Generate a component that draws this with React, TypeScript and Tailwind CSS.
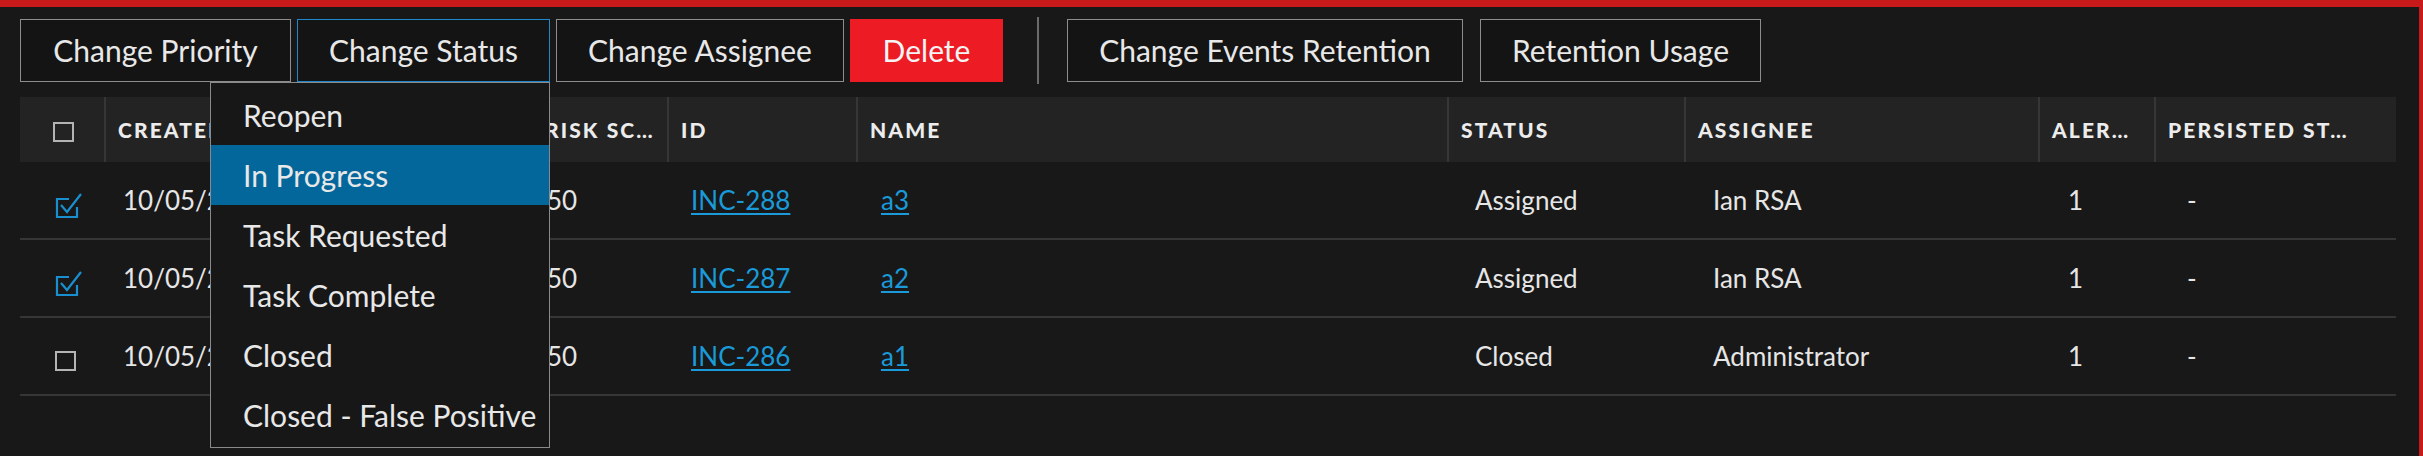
import React from 'react'

const cols = 'grid grid-cols-[84px_427px_136px_189px_591px_237px_354px_116px_242px]'

const statuses = ['Reopen', 'In Progress', 'Task Requested', 'Task Complete', 'Closed', 'Closed - False Positive']

const rows = [
  { checked: true, created: '10/05/2023 11:42:18 AM', risk: '50', id: 'INC-288', name: 'a3', status: 'Assigned', assignee: 'Ian RSA', alerts: '1', persisted: '-' },
  { checked: true, created: '10/05/2023 11:40:02 AM', risk: '50', id: 'INC-287', name: 'a2', status: 'Assigned', assignee: 'Ian RSA', alerts: '1', persisted: '-' },
  { checked: false, created: '10/05/2023 11:37:51 AM', risk: '50', id: 'INC-286', name: 'a1', status: 'Closed', assignee: 'Administrator', alerts: '1', persisted: '-' },
]

const Box = ({ className = '' }: { className?: string }) => (
  <div className={`w-[21px] h-[20px] border-2 border-[#b4b4b4] ${className}`} />
)

const CheckedBox = () => (
  <svg width="27" height="27" viewBox="0 0 27 27" fill="none" stroke="#1a8fd0" strokeWidth="2.2" className="mt-[12px]">
    <path d="M14 6H2v18h20V14" />
    <path d="M6 12l6 7L26 1" />
  </svg>
)

const ToolButton = ({ label, width, active }: { label: string; width: string; active?: boolean }) => (
  <div className={`${width} h-[63px] flex items-center justify-center border bg-[#141414] text-[30px] text-[#e8e8e8] ${active ? 'border-[#1d87c9]' : 'border-[#8d8d8d]'}`}>
    {label}
  </div>
)

export default function App() {
  return (
    <div className="w-[2423px] h-[456px] overflow-hidden bg-[#181818] border-t-[7px] border-t-[#c8191b] border-r-[4px] border-r-[#c8191b] font-['Lato',sans-serif]">
      {/* toolbar */}
      <div className="flex items-center pl-[20px] pt-[10px]">
        <ToolButton label="Change Priority" width="w-[271px]" />
        <div className="relative ml-[6px]">
          <ToolButton label="Change Status" width="w-[253px]" active />
          <div className="absolute top-full right-0 z-10 w-[340px] border border-[#8a8a8a] bg-[#171717] py-[2px]">
            {statuses.map((s) => (
              <div
                key={s}
                className={`h-[60px] flex items-center pl-[32px] text-[30px] text-[#e8e8e8] ${s === 'In Progress' ? 'bg-[#04679b]' : ''}`}
              >
                {s}
              </div>
            ))}
          </div>
        </div>
        <div className="ml-[6px]">
          <ToolButton label="Change Assignee" width="w-[288px]" />
        </div>
        <div className="ml-[6px] w-[153px] h-[63px] flex items-center justify-center bg-[#ed1c24] text-[30px] text-[#f4f4f4]">
          Delete
        </div>
        <div className="ml-[34px] w-[2px] h-[67px] bg-[#6a6a6a]" />
        <div className="ml-[28px]">
          <ToolButton label="Change Events Retention" width="w-[396px]" />
        </div>
        <div className="ml-[17px]">
          <ToolButton label="Retention Usage" width="w-[281px]" />
        </div>
      </div>

      {/* table */}
      <div className="mt-[13px] ml-[20px] w-[2376px]">
        <div className={`${cols} h-[65px] bg-[#232323] text-[21px] font-black tracking-[0.1em] text-[#ececec] uppercase`}>
          <div className="flex items-center pl-[33px]">
            <Box className="mt-[5px]" />
          </div>
          {['Created', 'Risk Sc…', 'ID', 'Name', 'Status', 'Assignee', 'Aler…', 'Persisted St…'].map((h) => (
            <div key={h} className="flex items-center border-l-2 border-[#363636] pl-[12px] whitespace-nowrap overflow-hidden">
              {h}
            </div>
          ))}
        </div>
        {rows.map((r) => (
          <div key={r.id} className={`${cols} h-[78px] border-b-2 border-[#363636] items-center text-[26px] text-[#e6e6e6]`}>
            <div className="pl-[35px] flex items-center">{r.checked ? <CheckedBox /> : <Box className="mt-[10px]" />}</div>
            <div className="pl-[19px] whitespace-nowrap overflow-hidden">{r.created}</div>
            <div className="pl-[16px]">{r.risk}</div>
            <div className="pl-[24px]">
              <span className="text-[#1a9ad8] underline decoration-[2px] underline-offset-[3px]">{r.id}</span>
            </div>
            <div className="pl-[25px]">
              <span className="text-[#1a9ad8] underline decoration-[2px] underline-offset-[3px]">{r.name}</span>
            </div>
            <div className="pl-[28px]">{r.status}</div>
            <div className="pl-[29px]">{r.assignee}</div>
            <div className="pl-[30px]">{r.alerts}</div>
            <div className="pl-[33px]">{r.persisted}</div>
          </div>
        ))}
      </div>
    </div>
  )
}
